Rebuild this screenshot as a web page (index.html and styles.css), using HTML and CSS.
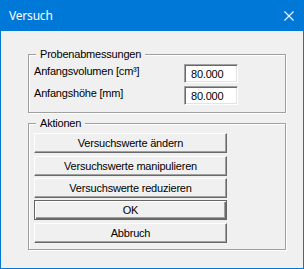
FILE: index.html
```html
<!DOCTYPE html>
<html>
<head>
<meta charset="utf-8">
<link rel="stylesheet" href="styles.css">
</head>
<body>
<div class="window">
  <div class="titlebar">
    <span class="title">Versuch</span>
    <svg class="close" width="10" height="10" viewBox="0 0 10 10"><path d="M0.5 0.5L9.5 9.5M9.5 0.5L0.5 9.5" stroke="#fff" stroke-width="1.1" fill="none"/></svg>
  </div>
  <div class="content">
    <div class="group group-dims">
      <span class="legend">Probenabmessungen</span>
      <div class="row"><span class="label">Anfangsvolumen [cm³]</span><input class="field" value="80.000" readonly></div>
      <div class="row"><span class="label">Anfangshöhe [mm]</span><input class="field" value="80.000" readonly></div>
    </div>
    <div class="group group-actions">
      <span class="legend">Aktionen</span>
      <button class="btn">Versuchswerte ändern</button>
      <button class="btn btn-space">Versuchswerte manipulieren</button>
      <button class="btn">Versuchswerte reduzieren</button>
      <button class="btn btn-default">OK</button>
      <button class="btn btn-space">Abbruch</button>
    </div>
  </div>
</div>
</body>
</html>
```
FILE: styles.css
```css
html, body {
  margin: 0;
  padding: 0;
}
body {
  background: #f0f0f0;
  font-family: "Liberation Sans", Arial, sans-serif;
  font-size: 11px;
  letter-spacing: -0.2px;
  color: #000;
}
.window {
  width: 304px;
  height: 269px;
  box-sizing: border-box;
  border: 1px solid #0078d7;
  background: #f0f0f0;
  display: flex;
  flex-direction: column;
}
.titlebar {
  height: 30px;
  flex: none;
  background: #0078d7;
  color: #fff;
  display: flex;
  align-items: center;
  justify-content: space-between;
  padding: 0 9px 0 8px;
  font-family: "Noto Sans", "Open Sans", sans-serif;
  font-size: 12px;
  letter-spacing: -0.2px;
}
.title {
  line-height: 16px;
  margin-top: -1px;
}
.close {
  display: block;
}
.content {
  padding: 23px 0 0 27px;
}
.group {
  position: relative;
  width: 258px;
  box-sizing: border-box;
  border: 1px solid #a0a0a0;
  box-shadow: 1px 1px 0 #fff, inset 1px 1px 0 #fff;
  padding: 9px 0 0 5px;
}
.legend {
  position: absolute;
  top: -7px;
  left: 7px;
  padding: 0 4px;
  background: #f0f0f0;
  line-height: 13px;
}
.group-dims {
  height: 59px;
}
.row {
  display: flex;
  height: 19px;
}
.row + .row {
  margin-top: 3px;
}
.label {
  width: 150px;
  line-height: 13px;
  margin-top: 1px;
}
.field {
  width: 54px;
  height: 19px;
  box-sizing: border-box;
  margin: 0;
  padding: 0 0 0 6px;
  border: 1px solid;
  border-color: #a0a0a0 #fff #fff #a0a0a0;
  box-shadow: inset 1px 1px 0 #696969, inset -1px -1px 0 #e3e3e3;
  background: #fff;
  font: 11px "Liberation Sans", Arial, sans-serif;
  letter-spacing: -0.2px;
  color: #000;
  outline: none;
}
.group-actions {
  height: 127px;
  margin-top: 10px;
  display: flex;
  flex-direction: column;
  align-items: flex-start;
  gap: 2px;
}
.btn {
  width: 193px;
  height: 20px;
  box-sizing: border-box;
  margin: 0;
  padding: 0 0 1px;
  background: #f0f0f0;
  border: 1px solid;
  border-color: #fff #696969 #696969 #fff;
  box-shadow: inset -1px -1px 0 #a0a0a0;
  font: 11px "Liberation Sans", Arial, sans-serif;
  letter-spacing: -0.2px;
  color: #000;
}
.btn-space {
  margin-top: 1px;
}
.btn-default {
  border-color: #646464;
  box-shadow: inset 1px 1px 0 #fff, inset -1px -1px 0 #696969, inset -2px -2px 0 #a0a0a0;
}
```
